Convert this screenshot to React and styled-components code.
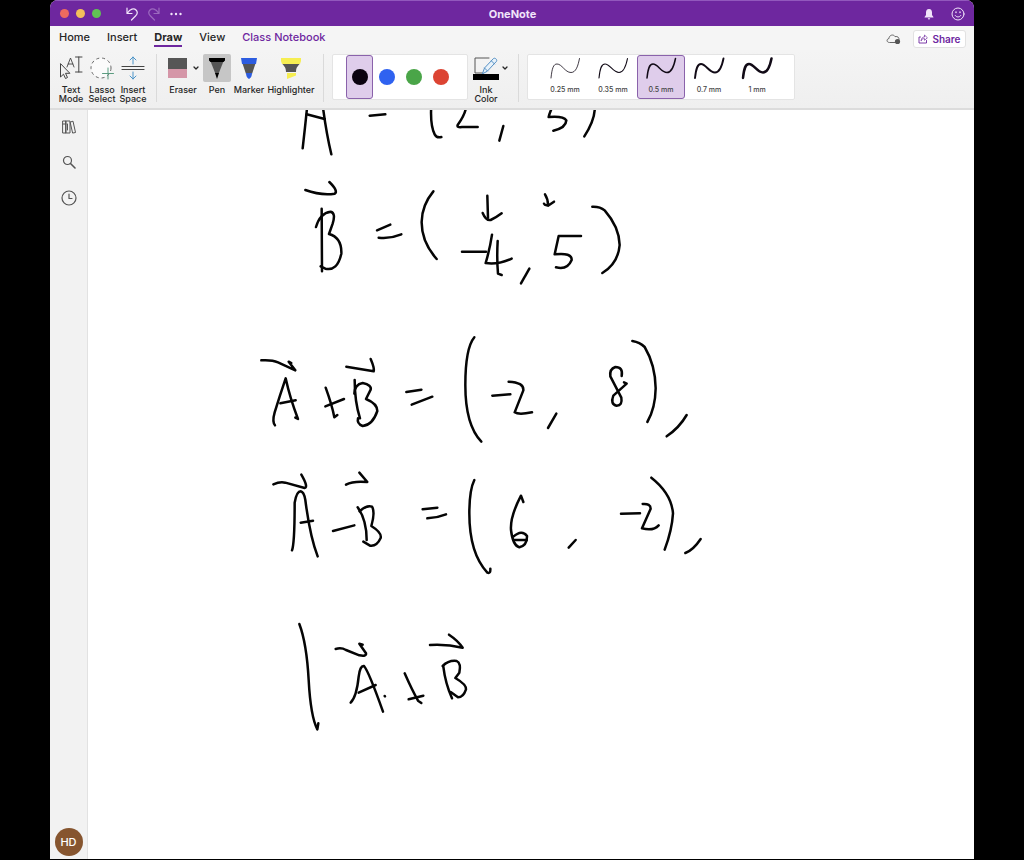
import * as React from "react";
import styled, { createGlobalStyle } from "styled-components";

const GlobalStyle = createGlobalStyle`
  * {
    box-sizing: border-box;
  }

  body {
    margin: 0;
    background: #000;
    font-family: Inter, "Liberation Sans", sans-serif;
    color: #262626;
  }

  button {
    margin: 0;
    padding: 0;
    border: 0;
    background: none;
    color: inherit;
    font: inherit;
  }

  svg {
    display: block;
  }
`;

const tabs = ["Home", "Insert", "Draw", "View", "Class Notebook"];

const colors = [
  { name: "Black", value: "#0b0210" },
  { name: "Blue", value: "#2f62f0" },
  { name: "Green", value: "#4aa548" },
  { name: "Red", value: "#dc4433" },
];

const widths = [
  { label: "0.25 mm", stroke: 0.8 },
  { label: "0.35 mm", stroke: 1.1 },
  { label: "0.5 mm", stroke: 1.5 },
  { label: "0.7 mm", stroke: 1.9 },
  { label: "1 mm", stroke: 2.5 },
];

// Ink is kept at three units per pixel
const ink = [
  {
    x: 606,
    y: -15,
    strokes: [
      "M52 0Q46 60 38 130",
      "M98 0Q108 80 124 148",
      "M50 28L104 42",
      "M239 32L286 28",
      "M424 0Q420 60 434 88Q440 100 454 96",
      "M528 0Q530 22 503 60Q500 68 516 66L563 66",
      "M640 63L628 107",
      "M786 8Q778 26 776 36Q820 32 829 46Q828 68 790 77",
      "M914 0Q918 40 883 94",
      "M46 255Q92 272 134 266Q146 258 118 231",
      "M95 311L96 499",
      "M78 366Q90 324 122 320Q138 324 128 356L117 387Q156 398 154 446Q142 500 106 491L92 484",
      "M261 376L301 359",
      "M266 398Q300 402 334 388",
      "M430 259Q396 300 395 350Q394 410 440 462",
      "M592 272L594 338",
      "M578 324Q588 348 602 345Q618 338 635 325",
      "M765 268Q774 282 774 300Q764 302 762 296M774 302L792 290",
      "M516 440L588 440",
      "M606 389Q600 430 587 474Q622 480 665 461",
      "M623 408Q620 460 624 506L635 510",
      "M718 491L693 535",
      "M873 393L806 393Q800 420 794 448Q846 442 845 465Q832 496 798 487",
      "M907 305Q930 304 944 316Q988 366 989 420Q984 476 937 504",
    ],
  },
  {
    x: 486,
    y: 645,
    strokes: [
      "M34 106Q66 104 84 112L136 136L116 110L124 114",
      "M75 301Q66 290 74 262Q90 210 107 160Q120 220 144 282L136 278",
      "M91 235L137 226",
      "M227 188Q246 240 253 277L262 270",
      "M226 244L282 222",
      "M289 125L371 139Q374 130 362 102",
      "M314 165Q314 230 330 280",
      "M313 206Q314 178 338 174Q366 180 362 194L348 222Q382 236 382 258Q368 300 338 303Q320 296 324 280",
      "M469 201L514 194",
      "M485 239L547 215",
    ],
  },
  {
    x: 1086,
    y: 645,
    strokes: [
      "M73 37Q46 70 46 180Q46 300 94 350",
      "M127 212L181 208",
      "M176 170Q222 172 220 196L194 262Q206 270 246 262",
      "M319 266L294 309",
      "M515 153Q520 126 496 126Q478 132 481 154L514 218Q518 242 500 242Q480 238 490 212L530 176L522 172",
      "M547 48Q570 52 584 66Q616 120 617 190Q616 250 592 291",
      "M710 270Q688 308 650 334",
    ],
  },
  {
    x: 516,
    y: 1050,
    strokes: [
      "M40 73Q60 64 76 68L134 84Q146 82 124 44",
      "M96 271Q104 250 104 128Q110 94 122 94Q132 96 136 120Q150 230 173 289",
      "M122 188L159 182",
      "M219 213L283 196",
      "M258 74Q280 62 322 66L298 38",
      "M293 142Q320 180 320 240",
      "M299 154Q320 134 336 140Q346 156 334 198Q366 218 362 234Q350 260 330 257L310 245",
      "M488 148L532 143",
      "M502 175Q530 174 558 163",
    ],
  },
  {
    x: 1086,
    y: 1050,
    strokes: [
      "M73 60Q58 90 58 160Q58 280 112 338Q122 342 121 326",
      "M220 126L213 107Q180 170 183 210Q188 256 208 262Q232 256 231 228Q216 208 190 230",
      "M190 240L230 240",
      "M377 240L356 263",
      "M513 161L570 160",
      "M578 132Q602 130 602 146L576 205Q610 214 626 196",
      "M604 53Q664 100 669 160Q666 210 644 269",
      "M752 237Q730 270 706 279",
    ],
  },
  {
    x: 576,
    y: 1500,
    strokes: [
      "M58 42Q80 100 86 210Q92 320 112 358L115 340",
      "M167 117Q184 112 198 120L238 136Q260 140 258 130L238 101L248 104",
      "M212 278Q230 260 236 200Q240 166 252 168Q266 184 309 305",
      "M236 248L287 225",
      "M314 258L315 259",
      "M374 190Q396 240 414 272L424 279",
      "M386 268L430 257",
      "M450 105Q500 102 548 113Q534 92 507 74",
      "M490 170Q496 220 516 265",
      "M488 168Q506 150 530 153Q544 160 538 188L526 204Q560 224 558 238Q550 262 534 262L512 246",
    ],
  },
];

function Icon({ width, height, children, ...rest }) {
  return (
    <svg
      width={width}
      height={height}
      viewBox={`0 0 ${width} ${height}`}
      fill="none"
      stroke="currentColor"
      strokeLinecap="round"
      strokeLinejoin="round"
      aria-hidden="true"
      {...rest}
    >
      {children}
    </svg>
  );
}

function Chevron() {
  return (
    <Icon width={6} height={6} strokeWidth="1.3">
      <path d="M1 2l2 2 2-2" />
    </Icon>
  );
}

function TitleBar() {
  return (
    <Bar>
      <BarSide>
        <Light color="#ed6a5f" aria-label="Close" />
        <Light color="#f4bf5b" aria-label="Minimize" />
        <Light color="#61c455" aria-label="Zoom" />
        <QuickAccess>
          <button aria-label="Undo">
            <Icon width={12} height={14} strokeWidth="1.2">
              <path d="M1 1v5.500h5M1.500 6C4 1.800 8 1 10 3s1.500 4-.5 6L5.500 13" />
            </Icon>
          </button>
          <Faded aria-label="Redo">
            <Icon width={12} height={14} strokeWidth="1.2">
              <path d="M11 1v5.500H6M10.500 6C8 1.800 4 1 2 3s-1.500 4 .5 6l4 4" />
            </Icon>
          </Faded>
          <button aria-label="More">
            <Icon width={12} height={4} fill="currentColor" stroke="none">
              <circle cx="1.500" cy="2" r="1.200" />
              <circle cx="6" cy="2" r="1.200" />
              <circle cx="10.500" cy="2" r="1.200" />
            </Icon>
          </button>
        </QuickAccess>
      </BarSide>
      <Title>OneNote</Title>
      <BarSide $end>
        <button aria-label="Notifications">
          <Icon width={10} height={12} fill="currentColor" stroke="none">
            <path d="M5 1C2.800 1 2 2.600 2 4.500V7L.6 9v.6h8.800V9L8 7V4.500C8 2.600 7.200 1 5 1zM3.800 10.200a1.200 1.200 0 0 0 2.400 0z" />
          </Icon>
        </button>
        <button aria-label="Feedback">
          <Icon width={14} height={14}>
            <circle cx="7" cy="7" r="6" />
            <path d="M4.200 8.500c1 2 4.600 2 5.600 0" />
            <path d="M5 5v.6M9 5v.6" strokeWidth="1.400" />
          </Icon>
        </button>
      </BarSide>
    </Bar>
  );
}

function TabRow() {
  return (
    <Tabs>
      {tabs.map((tab) => (
        <Tab
          key={tab}
          $active={tab === "Draw"}
          $accent={tab === "Class Notebook"}
        >
          {tab}
        </Tab>
      ))}
      <TabActions>
        <Icon width={15} height={12} stroke="#666">
          <path d="M9 9.500H3.500C.5 9.500.2 6 3 5.500 3 2 7.500.8 9 3.600c2.800-.6 4.300 1 4 3" />
          <circle cx="11.500" cy="8.500" r="2.600" fill="#555" stroke="none" />
        </Icon>
        <Share>
          <Icon width={10} height={10} strokeWidth=".9">
            <path d="M2.500 3H1v6h7.500V6.500" />
            <path
              d="M3.200 6.500C3.400 4 4.600 3 6.500 3V1L9.400 3.800 6.500 6.300V4.600C5 4.600 4 5 3.200 6.500z"
              strokeWidth=".7"
            />
          </Icon>
          Share
        </Share>
      </TabActions>
    </Tabs>
  );
}

function DrawRibbon() {
  return (
    <Ribbon>
      <Group $gap={1}>
        <Tool $width={30}>
          <ToolIcon>
            <Icon width={24} height={26} stroke="#444">
              <path d="M1.500 9v13l3-2.800 2 4.300 2-1-2-4.200h4z" />
              <path d="M8 12l3.500-9 3.500 9M9.200 9h4.600" strokeWidth=".9" />
              <path d="M16.500 2H23M19.800 2v15M16.500 17H23" />
            </Icon>
          </ToolIcon>
          <span>Text Mode</span>
        </Tool>
        <Tool $width={30}>
          <ToolIcon>
            <Icon width={24} height={26}>
              <circle
                cx="11"
                cy="13"
                r="10"
                fill="#fbfbfb"
                stroke="#666"
                strokeDasharray="3 3"
                strokeLinecap="butt"
              />
              <path d="M18 13v11M12.500 18.500h11" stroke="#5b9c80" />
            </Icon>
          </ToolIcon>
          <span>Lasso Select</span>
        </Tool>
        <Tool $width={30}>
          <ToolIcon>
            <Icon width={24} height={26}>
              <path
                d="M1 11.500h22M1 14.500h22"
                stroke="#444"
                strokeWidth="1.200"
              />
              <path
                d="M12 9V2M9 5l3-3 3 3M12 17v7M9 21l3 3 3-3"
                stroke="#4c94c8"
              />
            </Icon>
          </ToolIcon>
          <span>Insert Space</span>
        </Tool>
      </Group>
      <Divider />
      <Group $gap={2}>
        <Tool $width={36}>
          <ToolIcon>
            <Icon width={20} height={22} stroke="none">
              <path d="M1 1h19v11H1z" fill="#565656" />
              <path d="M1 12h19v9H1z" fill="#d596a8" />
            </Icon>
            <Chevron />
          </ToolIcon>
          <span>Eraser</span>
        </Tool>
        <Tool $width={28}>
          <ToolIcon $active>
            <Icon width={16} height={22} stroke="none">
              <path d="M1 3h14L9.500 17h-3z" fill="#555" />
              <path
                d="M0 1h16v2.500L14.500 5h-13L0 3.500zM6 16h4l-2 6z"
                fill="#000"
              />
            </Icon>
          </ToolIcon>
          <span>Pen</span>
        </Tool>
        <Tool $width={32}>
          <ToolIcon>
            <Icon width={16} height={22} stroke="none">
              <path d="M1 5h14l-4 12H5z" fill="#555" />
              <path
                d="M0 1h16l-1 6H1zM5 16h6c0 3-1 5-3 6-2-1-3-3-3-6z"
                fill="#2c5ce0"
              />
            </Icon>
          </ToolIcon>
          <span>Marker</span>
        </Tool>
        <Tool $width={48}>
          <ToolIcon>
            <Icon width={20} height={22} stroke="none">
              <path d="M1 6h18c-1 3-4 3-4 9H5c0-6-3-6-4-9z" fill="#555" />
              <path
                d="M0 1h20v3l-1 3H1L0 4zM6 16h9v2.500L6 22z"
                fill="#f6ee52"
              />
            </Icon>
          </ToolIcon>
          <span>Highlighter</span>
        </Tool>
      </Group>
      <Divider />
      <Gallery>
        {colors.map((color) => (
          <Swatch
            key={color.name}
            aria-label={color.name}
            $color={color.value}
            $active={color.name === "Black"}
          />
        ))}
      </Gallery>
      <InkColor>
        <Tool $width={26}>
          <ToolIcon>
            <Icon width={26} height={24}>
              <path d="M16 2H2v15h8" stroke="#555" />
              <path
                d="M9.500 17.500l2-5.500L20.500 2.500c1.500-1 4 1 3 2.800L14.500 15zM11.500 12l3 3M18.500 5l3 3"
                fill="#e8f2fa"
                stroke="#5590c4"
              />
              <path d="M0 18h26v6H0z" fill="#000" stroke="none" />
            </Icon>
          </ToolIcon>
          <span>Ink Color</span>
        </Tool>
        <InkMenu aria-label="More ink colors">
          <Chevron />
        </InkMenu>
      </InkColor>
      <Divider />
      <Gallery>
        {widths.map(({ label, stroke }) => (
          <PenWidth key={label} $active={label === "0.5 mm"}>
            <Icon width={32} height={24} stroke="#110a16" strokeWidth={stroke}>
              <path d="M2 22C3 12 4.500 8 8 8c5 0 8 8.500 14 8.500C27 16.500 29 10 30.500 2.500" />
            </Icon>
            {label}
          </PenWidth>
        ))}
      </Gallery>
    </Ribbon>
  );
}

function Sidebar() {
  return (
    <Rail>
      <button aria-label="Notebooks">
        <Icon width={14} height={14} stroke="#555">
          <path d="M1 1h3v12H1zM4 1h4v12H4zM8.500 2l2.500-.8L13.500 12.500l-2.500.5zM1 4h3M5.500 4v6" />
        </Icon>
      </button>
      <button aria-label="Search">
        <Icon width={14} height={14} stroke="#555" strokeWidth="1.200">
          <circle cx="5.500" cy="5.500" r="4" />
          <path d="M8.500 8.500L13 13" strokeWidth="1.600" />
        </Icon>
      </button>
      <button aria-label="Recent">
        <Icon width={16} height={16} stroke="#555" strokeWidth="1.200">
          <circle cx="8" cy="8" r="7" />
          <path d="M8 4v4.500h3" />
        </Icon>
      </button>
      <Avatar>HD</Avatar>
    </Rail>
  );
}

function Page() {
  return (
    <Canvas>
      <svg
        width="760"
        height="640"
        viewBox="0 0 2280 1920"
        fill="none"
        stroke="#050505"
        strokeWidth="7.500"
        strokeLinecap="round"
        strokeLinejoin="round"
        role="img"
        aria-label="Handwritten vector sums"
      >
        {ink.map((group) => (
          <g
            key={`${group.x}-${group.y}`}
            transform={`translate(${group.x} ${group.y})`}
          >
            {group.strokes.map((d) => (
              <path key={d} d={d} />
            ))}
          </g>
        ))}
      </svg>
    </Canvas>
  );
}

export default function App() {
  return (
    <Desktop>
      <GlobalStyle />
      <Window>
        <TitleBar />
        <TabRow />
        <DrawRibbon />
        <Body>
          <Sidebar />
          <Page />
        </Body>
      </Window>
    </Desktop>
  );
}

const Desktop = styled.div`
  display: flex;
  min-height: 100vh;
  padding: 0 50px 1px;
  background: #000;
`;

const Window = styled.div`
  flex: 1;
  min-width: 0;
  display: flex;
  flex-direction: column;
  overflow: hidden;
  border-radius: 8px 8px 0 0;
  background: #f3f3f3;
`;

const Bar = styled.header`
  display: grid;
  grid-template-columns: 1fr auto 1fr;
  align-items: center;
  height: 26px;
  padding: 0 9px 0 10px;
  border-top: 1px solid #9258bd;
  background: #6e279f;
  color: #f1e4fa;
`;

const BarSide = styled.div`
  display: flex;
  align-items: center;
  justify-content: ${(props) => (props.$end ? "flex-end" : "flex-start")};
  gap: ${(props) => (props.$end ? "17px" : "7px")};
`;

const Light = styled.button`
  width: 9px;
  height: 9px;
  border-radius: 50%;
  background: ${(props) => props.color};
`;

const QuickAccess = styled.div`
  display: flex;
  align-items: center;
  gap: 10px;
  margin-left: 18px;
`;

const Faded = styled.button`
  opacity: 0.35;
`;

const Title = styled.h1`
  margin: 0;
  font-size: 11px;
  font-weight: 700;
`;

const Tabs = styled.nav`
  display: flex;
  align-items: flex-start;
  gap: 17px;
  height: 24px;
  padding: 0 8px 0 9px;
  background: #f5f5f5;
`;

const Tab = styled.button`
  height: 21px;
  padding-top: 2px;
  border-bottom: 2px solid
    ${(props) => (props.$active ? "#6e279f" : "transparent")};
  color: ${(props) => (props.$accent ? "#6e279f" : "#262626")};
  font-size: 11px;
  font-weight: ${(props) => (props.$active ? 700 : 500)};
  line-height: 16px;
`;

const TabActions = styled.div`
  display: flex;
  align-items: center;
  gap: 12px;
  margin: 4px 0 0 auto;
`;

const Share = styled.button`
  display: flex;
  align-items: center;
  justify-content: center;
  gap: 4px;
  width: 53px;
  height: 18px;
  border: 1px solid #e2e2e2;
  border-radius: 3px;
  background: #fff;
  color: #6e279f;
  font-size: 10px;
  font-weight: 600;
`;

const Ribbon = styled.div`
  display: flex;
  align-items: flex-start;
  height: 60px;
  padding: 4px 6px 0;
  border-bottom: 2px solid #dcdcdc;
  background: linear-gradient(#f4f4f4, #efefef);
`;

const Group = styled.div`
  display: flex;
  gap: ${(props) => props.$gap}px;
`;

const Divider = styled.div`
  width: 1px;
  height: 48px;
  margin: 0 8px;
  background: #dadada;
`;

const Tool = styled.button`
  display: flex;
  flex-direction: column;
  align-items: center;
  gap: 3px;
  width: ${(props) => props.$width}px;
  font-size: 9px;
  font-weight: 500;
  line-height: 9px;
`;

const ToolIcon = styled.span`
  display: flex;
  align-items: center;
  justify-content: center;
  gap: 6px;
  width: 100%;
  height: 28px;
  border-radius: 2px;
  background: ${(props) => (props.$active ? "#c6c6c6" : "transparent")};
`;

const Gallery = styled.div`
  display: flex;
  height: 46px;
  padding: 0 13px;
  border: 1px solid #e4e4e4;
  border-radius: 2px;
  background: #fff;
`;

const Swatch = styled.button`
  display: flex;
  align-items: center;
  justify-content: center;
  width: 27px;
  height: 44px;
  border: 1px solid ${(props) => (props.$active ? "#8a62ab" : "transparent")};
  border-radius: 3px;
  background: ${(props) => (props.$active ? "#dfcdeb" : "transparent")};

  &::before {
    content: "";
    width: 16px;
    height: 16px;
    border-radius: 50%;
    background: ${(props) => props.$color};
  }
`;

const InkColor = styled.div`
  display: flex;
  align-items: flex-start;
  gap: 3px;
  padding: 0 2px 0 5px;
`;

const InkMenu = styled.button`
  display: flex;
  align-items: center;
  height: 28px;
`;

const PenWidth = styled.button`
  display: flex;
  flex-direction: column;
  align-items: center;
  gap: 4px;
  width: 48px;
  height: 44px;
  border: 1px solid ${(props) => (props.$active ? "#8a62ab" : "transparent")};
  border-radius: 3px;
  background: ${(props) => (props.$active ? "#dfcdeb" : "transparent")};
  color: #444;
  font-size: 7px;
  font-weight: 500;
  line-height: 12px;
`;

const Body = styled.div`
  flex: 1;
  display: flex;
`;

const Rail = styled.aside`
  display: flex;
  flex-direction: column;
  align-items: center;
  gap: 21px;
  width: 38px;
  padding: 10px 0 3px;
  border-right: 1px solid #e2e2e2;
  background: #f2f2f2;
`;

const Avatar = styled.button`
  width: 28px;
  height: 28px;
  margin-top: auto;
  border-radius: 50%;
  background: #86552f;
  color: #fff;
  font-size: 11px;
  font-weight: 500;
`;

const Canvas = styled.main`
  flex: 1;
  min-width: 0;
  overflow: hidden;
  background: #fff;
`;
